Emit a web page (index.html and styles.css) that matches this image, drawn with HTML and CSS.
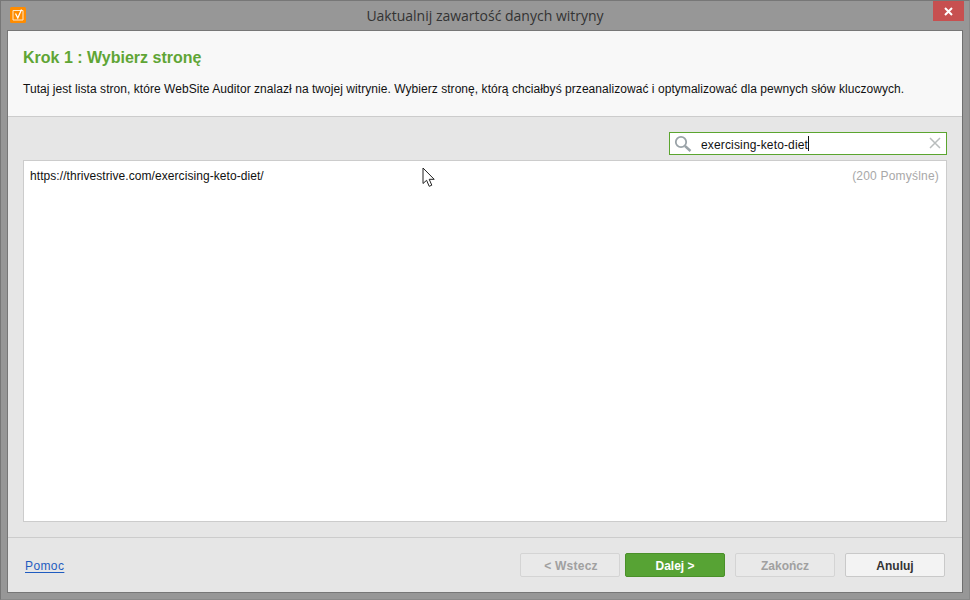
FILE: index.html
```html
<!DOCTYPE html>
<html lang="pl">
<head>
<meta charset="utf-8">
<title>Uaktualnij zawartość danych witryny</title>
<link rel="stylesheet" href="styles.css">
</head>
<body>
<div class="window">
  <div class="titlebar">
    <svg class="app-icon" width="16" height="16" viewBox="0 0 16 16"><rect width="16" height="16" rx="1.5" fill="#ff8c00"/><path d="M3 3.5h10v9.5H3z" fill="none" stroke="#ffe9cc" stroke-width="1"/><path d="M5.5 6.5l2.3 4.5 3.7-8.5" fill="none" stroke="#fff" stroke-width="1.3"/></svg>
    <div class="title">Uaktualnij zawartość danych witryny</div>
    <div class="close"><svg width="9" height="9" viewBox="0 0 9 9"><path d="M1 1l7 7M8 1L1 8" stroke="#fff" stroke-width="2"/></svg></div>
  </div>
  <div class="client">
    <header class="head">
      <h1>Krok 1 : Wybierz stronę</h1>
      <p>Tutaj jest lista stron, które WebSite Auditor znalazł na twojej witrynie. Wybierz stronę, którą chciałbyś przeanalizować i optymalizować dla pewnych słów kluczowych.</p>
    </header>
    <main class="body">
      <div class="search-row">
        <div class="search">
          <svg class="search-icon" width="18" height="18" viewBox="0 0 18 18"><circle cx="7" cy="7" r="5.2" fill="none" stroke="#9aa3a8" stroke-width="1.8"/><path d="M11 11l5.5 5" stroke="#9aa3a8" stroke-width="2.4"/></svg>
          <span class="query">exercising-keto-diet</span><span class="caret"></span>
          <svg class="clear" width="12" height="12" viewBox="0 0 12 12"><path d="M1 1l10 10M11 1L1 11" stroke="#b9bdbd" stroke-width="1.5"/></svg>
        </div>
      </div>
      <div class="list">
        <div class="row">
          <span class="url">https://thrivestrive.com/exercising-keto-diet/</span>
          <span class="status">(200 Pomyślne)</span>
        </div>
        <svg class="cursor" width="14" height="21" viewBox="0 0 14 21"><path d="M1 1v15.5l3.6-3.2 2.6 6 2.6-1.1-2.6-5.9h5z" fill="#fff" stroke="#222" stroke-width="1"/></svg>
      </div>
    </main>
    <footer class="foot">
      <a class="help" href="#">Pomoc</a>
      <div class="buttons">
        <button class="btn disabled back">&lt; Wstecz</button>
        <button class="btn primary">Dalej &gt;</button>
        <button class="btn disabled finish">Zakończ</button>
        <button class="btn normal">Anuluj</button>
      </div>
    </footer>
  </div>
</div>
</body>
</html>
```
FILE: styles.css
```css
* { box-sizing: border-box; }
html, body { margin: 0; padding: 0; }
body { width: 970px; height: 600px; overflow: hidden; font-family: "Liberation Sans", Arial, sans-serif; }
.window { width: 970px; height: 600px; background: #979797; border: 1px solid #777; border-right-color: #8a8a8a; border-bottom-color: #8a8a8a; display: flex; flex-direction: column; padding: 0 6px 6px; }
.titlebar { height: 29px; flex: none; position: relative; display: flex; justify-content: center; }
.app-icon { position: absolute; left: 3px; top: 6px; }
.title { font-family: "Open Sans", sans-serif; font-size: 14px; line-height: 30px; color: #333; }
.close { position: absolute; right: -1px; top: 0; width: 31px; height: 20px; background: #c75050; display: flex; align-items: center; justify-content: center; }
.client { flex: 1; display: flex; flex-direction: column; border: 1px solid #777; border-right-color: #6f6f6f; background: #e6e6e6; min-height: 0; }
.head { height: 86px; flex: none; background: #f8f8f8; border-bottom: 1px solid #ccc; padding: 17px 15px 0; }
.head h1 { margin: 0; font-size: 16px; line-height: 20px; font-weight: bold; color: #5fa535; }
.head p { margin: 14px 0 0; font-size: 12px; line-height: 14px; color: #111; white-space: nowrap; letter-spacing: 0.05px; }
.body { flex: 1; display: flex; flex-direction: column; padding: 15px; min-height: 0; }
.search-row { display: flex; justify-content: flex-end; margin-bottom: 5px; }
.search { width: 278px; height: 23px; background: #fff; border: 1px solid #5ba52f; display: flex; align-items: center; padding-left: 4px; position: relative; }
.search-icon { flex: none; }
.query { margin-left: 9px; padding-top: 2px; font-size: 12px; color: #111; letter-spacing: 0.15px; }
.caret { width: 1px; height: 15px; background: #111; }
.clear { position: absolute; right: 5px; top: 4px; }
.list { flex: 1; background: #fff; border: 1px solid #ccc; position: relative; }
.row { display: flex; justify-content: space-between; padding: 8px 7px 0 6px; font-size: 12px; line-height: 15px; }
.url { color: #111; letter-spacing: 0.065px; }
.status { color: #a8a8a8; letter-spacing: 0.2px; }
.cursor { position: absolute; left: 398px; top: 6px; }
.foot { height: 55px; flex: none; border-top: 1px solid #ccc; display: flex; align-items: flex-start; justify-content: space-between; padding: 15px 17px 0 17px; }
.help { font-size: 12px; line-height: 16px; margin-top: 5px; color: #1f5cc0; text-decoration: underline; text-underline-offset: 2px; letter-spacing: 0.4px; }
.buttons { display: flex; gap: 5px; }
.btn { width: 100px; height: 24px; padding: 2px 0 0; border-radius: 2px; font-family: inherit; font-size: 12px; font-weight: bold; }
.disabled { background: #e9e9e9; border: 1px solid #d4d4d4; color: #a0a0a0; }
.back { letter-spacing: 0.25px; padding-left: 2px; }
.primary { background: #57a334; border: 1px solid #4a9029; color: #fff; }
.finish { margin-left: 5px; }
.normal { margin-left: 5px; background: #f3f3f3; border: 1px solid #c9c9c9; color: #333; }
```
